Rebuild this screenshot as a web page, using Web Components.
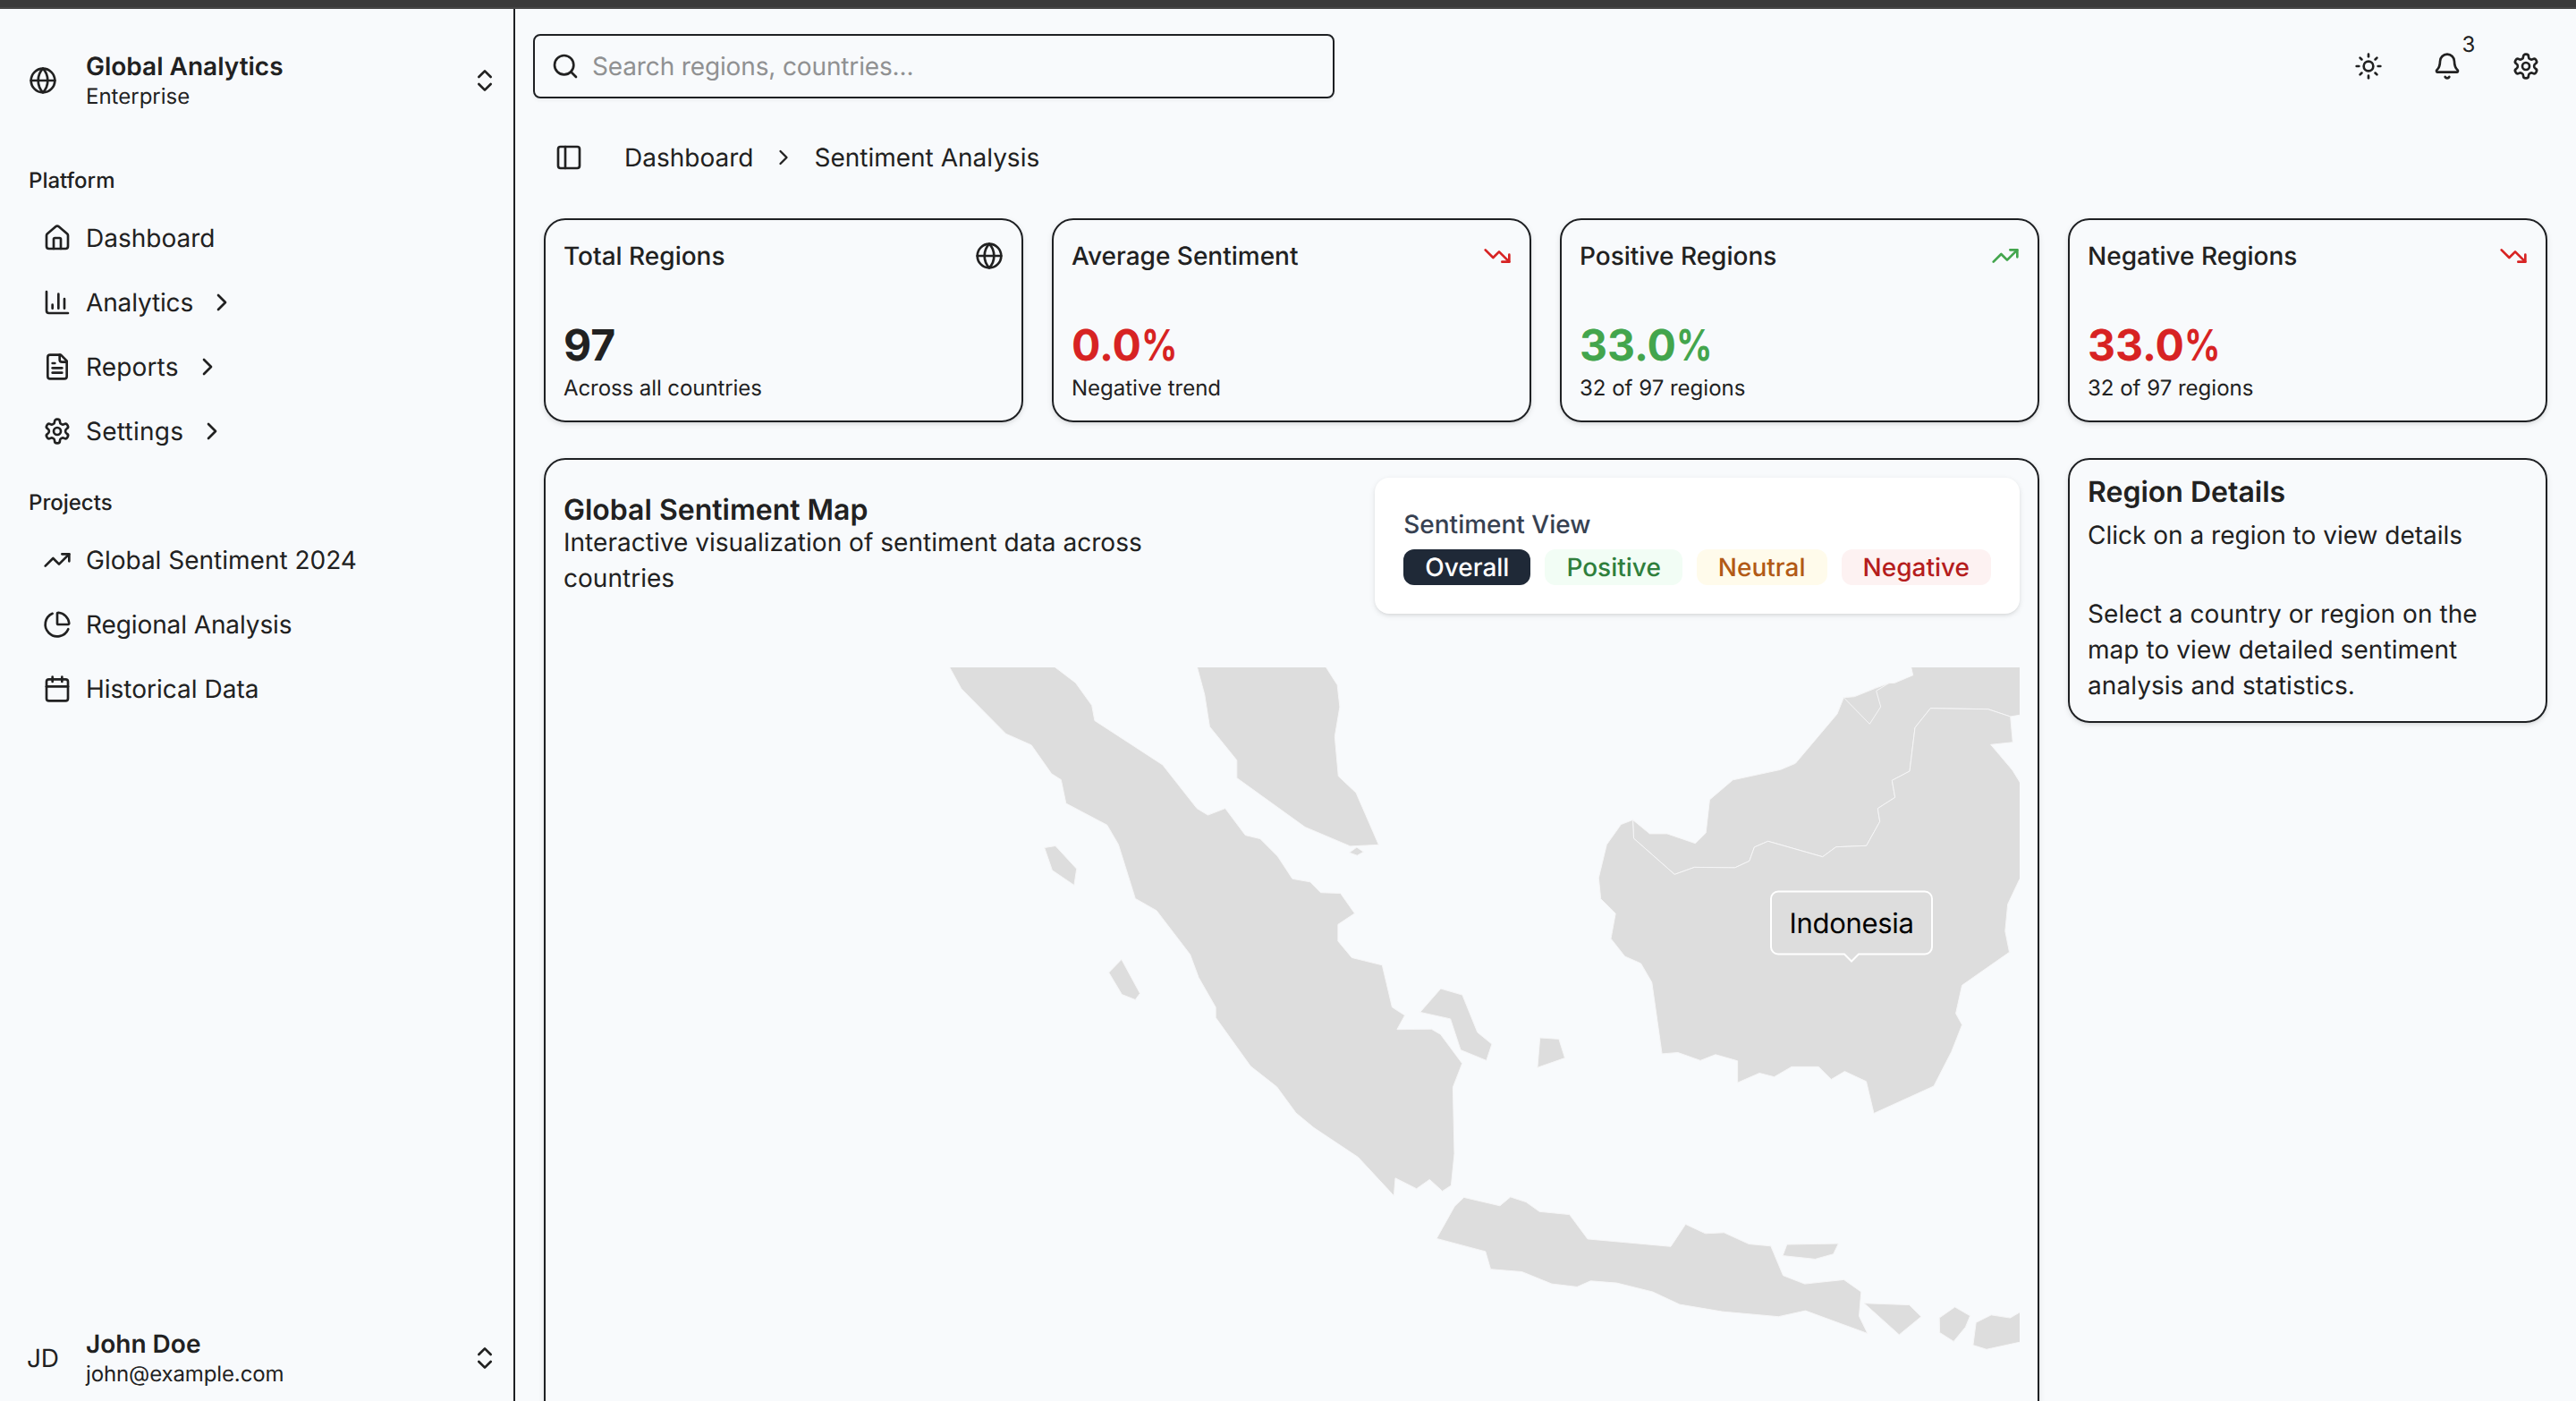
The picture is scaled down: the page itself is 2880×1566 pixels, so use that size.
<!DOCTYPE html>
<html lang="en">
<head>
<meta charset="utf-8">
<title>Global Analytics</title>
<style>
  :root { --bg: #f8fafc; --fg: #212121; --line: #1e2023; --red: #d72323; --green: #43a54d; }
  html, body { margin: 0; height: 100%; }
  body {
    background: var(--bg); color: var(--fg); overflow: hidden;
    font: 400 28px/40px Inter, "Liberation Sans", sans-serif;
    font-optical-sizing: none;
    text-rendering: geometricPrecision;
    -webkit-font-smoothing: antialiased;
  }
</style>
</head>
<body>
<app-shell>
  <app-sidebar slot="sidebar">
    <account-row slot="head" class="head"><ui-icon slot="avatar" name="globe"></ui-icon>Global Analytics<span slot="sub">Enterprise</span></account-row>
    <nav-group label="Platform">
      <nav-item icon="home">Dashboard</nav-item>
      <nav-item icon="chart" more style="letter-spacing:-.15px">Analytics</nav-item>
      <nav-item icon="file" more style="letter-spacing:.15px">Reports</nav-item>
      <nav-item icon="gear" more style="letter-spacing:.25px">Settings</nav-item>
    </nav-group>
    <nav-group label="Projects">
      <nav-item icon="up">Global Sentiment 2024</nav-item>
      <nav-item icon="pie" style="letter-spacing:-.1px">Regional Analysis</nav-item>
      <nav-item icon="calendar">Historical Data</nav-item>
    </nav-group>
    <account-row slot="foot"><span slot="avatar">JD</span>John Doe<span slot="sub" style="letter-spacing:-.12px">john@example.com</span></account-row>
  </app-sidebar>
  <top-header></top-header>
  <bread-crumbs><span>Dashboard</span><ui-icon name="right" style="--s:28px"></ui-icon><span>Sentiment Analysis</span></bread-crumbs>
  <dash-grid>
    <stat-card icon="globe" value="97" note="Across all countries" style="--track:-.08px">Total Regions</stat-card>
    <stat-card icon="down" tone="red" value="0.0%" note="Negative trend">Average Sentiment</stat-card>
    <stat-card icon="up" tone="green" value="33.0%" note="32 of 97 regions">Positive Regions</stat-card>
    <stat-card icon="down" tone="red" value="33.0%" note="32 of 97 regions">Negative Regions</stat-card>
    <map-card>
      <sentiment-view slot="tools"></sentiment-view>
      <region-map></region-map>
    </map-card>
    <region-details></region-details>
  </dash-grid>
</app-shell>

<script>
const ICONS = {
  globe: '<circle cx="12" cy="12" r="10"/><path d="M12 2a14.5 14.5 0 0 0 0 20 14.5 14.5 0 0 0 0-20"/><path d="M2 12h20"/>',
  updown: '<path d="m7 15 5 5 5-5"/><path d="m7 9 5-5 5 5"/>',
  home: '<path d="M15 21v-8a1 1 0 0 0-1-1h-4a1 1 0 0 0-1 1v8"/><path d="M3 10a2 2 0 0 1 .709-1.528l7-5.999a2 2 0 0 1 2.582 0l7 5.999A2 2 0 0 1 21 10v9a2 2 0 0 1-2 2H5a2 2 0 0 1-2-2z"/>',
  chart: '<path d="M3 3v16a2 2 0 0 0 2 2h16"/><path d="M18 17V9"/><path d="M13 17V5"/><path d="M8 17v-3"/>',
  file: '<path d="M15 2H6a2 2 0 0 0-2 2v16a2 2 0 0 0 2 2h12a2 2 0 0 0 2-2V7Z"/><path d="M14 2v4a2 2 0 0 0 2 2h4"/><path d="M10 9H8"/><path d="M16 13H8"/><path d="M16 17H8"/>',
  gear: '<path d="M12.22 2h-.44a2 2 0 0 0-2 2v.18a2 2 0 0 1-1 1.73l-.43.25a2 2 0 0 1-2 0l-.15-.08a2 2 0 0 0-2.73.73l-.22.38a2 2 0 0 0 .73 2.73l.15.1a2 2 0 0 1 1 1.72v.51a2 2 0 0 1-1 1.74l-.15.09a2 2 0 0 0-.73 2.73l.22.38a2 2 0 0 0 2.73.73l.15-.08a2 2 0 0 1 2 0l.43.25a2 2 0 0 1 1 1.73V20a2 2 0 0 0 2 2h.44a2 2 0 0 0 2-2v-.18a2 2 0 0 1 1-1.73l.43-.25a2 2 0 0 1 2 0l.15.08a2 2 0 0 0 2.73-.73l.22-.39a2 2 0 0 0-.73-2.73l-.15-.08a2 2 0 0 1-1-1.74v-.5a2 2 0 0 1 1-1.74l.15-.09a2 2 0 0 0 .73-2.73l-.22-.38a2 2 0 0 0-2.73-.73l-.15.08a2 2 0 0 1-2 0l-.43-.25a2 2 0 0 1-1-1.73V4a2 2 0 0 0-2-2z"/><circle cx="12" cy="12" r="3"/>',
  right: '<path d="m9 18 6-6-6-6"/>',
  up: '<path d="M22 7 13.5 15.5 8.5 10.5 2 17"/><path d="M16 7h6v6"/>',
  down: '<path d="M22 17 13.5 8.5 8.5 13.5 2 7"/><path d="M16 17h6v-6"/>',
  pie: '<path d="M21 12c.552 0 1.005-.449.95-.998a10 10 0 0 0-8.953-8.951c-.55-.055-.998.398-.998.95v8a1 1 0 0 0 1 1z"/><path d="M21.21 15.89A10 10 0 1 1 8 2.83"/>',
  calendar: '<path d="M8 2v4"/><path d="M16 2v4"/><rect width="18" height="18" x="3" y="4" rx="2"/><path d="M3 10h18"/>',
  search: '<circle cx="11" cy="11" r="8"/><path d="m21 21-4.3-4.3"/>',
  panel: '<rect width="18" height="18" x="3" y="3" rx="2"/><path d="M9 3v18"/>',
  sun: '<circle cx="12" cy="12" r="4"/><path d="M12 2v2"/><path d="M12 20v2"/><path d="m4.93 4.93 1.41 1.41"/><path d="m17.66 17.66 1.41 1.41"/><path d="M2 12h2"/><path d="M20 12h2"/><path d="m6.34 17.66-1.41 1.41"/><path d="m19.07 4.93-1.41 1.41"/>',
  bell: '<path d="M10.268 21a2 2 0 0 0 3.464 0"/><path d="M3.262 15.326A1 1 0 0 0 4 17h16a1 1 0 0 0 .74-1.673C19.41 13.956 18 12.499 18 8A6 6 0 0 0 6 8c0 4.499-1.411 5.956-2.738 7.326"/>'
};

function define(name, render) {
  customElements.define(name, class extends HTMLElement {
    constructor() { super(); this.attachShadow({ mode: 'open' }); }
    connectedCallback() { this.shadowRoot.innerHTML = render(this); }
  });
}

define('ui-icon', el => `
  <style>:host{display:block;flex:none;width:var(--s,32px);height:var(--s,32px)} svg{display:block;width:100%;height:100%}</style>
  <svg viewBox="0 0 24 24" fill="none" stroke="currentColor" stroke-width="2" stroke-linecap="round" stroke-linejoin="round">${ICONS[el.getAttribute('name')]}</svg>`);

define('app-shell', () => `
  <style>
    :host{display:flex;flex-direction:column;height:1566px;width:2880px;overflow:hidden}
    .strip{flex:none;height:8px;background:#3a3a3a;border-bottom:2px solid #464646}
    .cols{display:flex;flex:1;min-height:0}
    main{flex:1;min-width:0;display:flex;flex-direction:column;overflow:hidden}
  </style>
  <div class="strip"></div>
  <div class="cols"><slot name="sidebar"></slot><main><slot></slot></main></div>`);

define('app-sidebar', () => `
  <style>
    :host{display:flex;flex-direction:column;box-sizing:border-box;width:576px;flex:none;border-right:2px solid var(--line)}
    .head{padding:32px 0}
    nav{flex:1;display:flex;flex-direction:column;gap:16px}
  </style>
  <div class="head"><slot name="head"></slot></div>
  <nav><slot></slot></nav>
  <slot name="foot"></slot>`);

define('account-row', () => `
  <style>
    :host{display:flex;align-items:center;height:96px;padding:0 16px;gap:16px}
    .avatar{width:64px;display:flex;justify-content:center}
    .text{flex:1;display:flex;flex-direction:column}
    .name{font-weight:600;line-height:35px}
    .sub{font-size:24px;line-height:32px}
  </style>
  <div class="avatar"><slot name="avatar"></slot></div>
  <div class="text"><div class="name"><slot></slot></div><div class="sub"><slot name="sub"></slot></div></div>
  <ui-icon name="updown"></ui-icon>`);

define('nav-group', el => `
  <style>
    :host{display:flex;flex-direction:column}
    .label{height:64px;line-height:64px;padding-left:32px;font-size:24px;font-weight:500}
    .items{display:flex;flex-direction:column;gap:8px}
  </style>
  <div class="label">${el.getAttribute('label')}</div><div class="items"><slot></slot></div>`);

define('nav-item', el => `
  <style>:host{display:flex;align-items:center;gap:16px;height:64px;padding-left:48px}</style>
  <ui-icon name="${el.getAttribute('icon')}"></ui-icon><span><slot></slot></span>
  ${el.hasAttribute('more') ? '<ui-icon name="right"></ui-icon>' : ''}`);

define('top-header', () => `
  <style>
    :host{flex:none;display:flex;justify-content:space-between;align-items:center;padding:28px 20px 0}
    .search{box-sizing:border-box;width:896px;height:72px;display:flex;align-items:center;gap:14px;padding:0 18px;border:2px solid var(--line);border-radius:8px;box-shadow:0 2px 4px rgba(0,0,0,.06)}
    .hint{color:#909192;letter-spacing:-.14px}
    .actions{display:flex;gap:16px}
    .btn{position:relative;width:72px;height:72px;display:flex;align-items:center;justify-content:center}
    .badge{position:absolute;left:40px;top:-8px;width:40px;height:40px;text-align:center;font-size:24px}
  </style>
  <div class="search"><ui-icon name="search"></ui-icon><span class="hint">Search regions, countries...</span></div>
  <div class="actions">
    <div class="btn"><ui-icon name="sun"></ui-icon></div>
    <div class="btn"><ui-icon name="bell"></ui-icon><span class="badge">3</span></div>
    <div class="btn"><ui-icon name="gear"></ui-icon></div>
  </div>`);

define('bread-crumbs', () => `
  <style>
    :host{flex:none;display:flex;align-items:center;height:72px;padding:30px 0 0 44px}
    .trail{display:flex;align-items:center;gap:20px;padding-left:46px}
  </style>
  <ui-icon name="panel"></ui-icon><div class="trail"><slot></slot></div>`);

define('dash-grid', () => `
  <style>
    :host{flex:none;display:grid;grid-template-columns:repeat(4,536px);gap:40px 32px;padding:32px;align-items:start}
    ::slotted(map-card){grid-column:span 3}
  </style><slot></slot>`);

const CARD = 'box-sizing:border-box;border:2px solid var(--line);border-radius:24px;padding:20px;box-shadow:0 2px 6px rgba(0,0,0,.1),0 2px 4px -2px rgba(0,0,0,.1)';

define('stat-card', el => `
  <style>
    :host{display:flex;flex-direction:column;gap:48px;${CARD}}
    .top{display:flex;justify-content:space-between;align-items:center;font-weight:500}
    .value{font-size:48px;line-height:64px;font-weight:700}
    .unit{display:inline-block;transform:scaleX(.83);transform-origin:left}
    .note{font-size:24px;line-height:32px;letter-spacing:var(--track,0)}
    .tone{color:var(--${el.getAttribute('tone') || 'fg'})}
  </style>
  <div class="top"><slot></slot><ui-icon class="tone" name="${el.getAttribute('icon')}"></ui-icon></div>
  <div><div class="value tone">${el.getAttribute('value').replace('%', '<span class="unit">%</span>')}</div><div class="note">${el.getAttribute('note')}</div></div>`);

define('map-card', () => `
  <style>
    :host{display:flex;flex-direction:column;gap:60px;${CARD}}
    header{display:flex;justify-content:space-between;align-items:center}
    h2{margin:0;font-size:32px;line-height:32px;font-weight:600}
    p{margin:0;width:700px;letter-spacing:.03px}
  </style>
  <header><div><h2>Global Sentiment Map</h2><p>Interactive visualization of sentiment data across countries</p></div><slot name="tools"></slot></header>
  <slot></slot>`);

define('sentiment-view', () => `
  <style>
    :host{display:flex;flex-direction:column;gap:8px;padding:32px;background:#fff;border-radius:16px;box-shadow:0 2px 6px rgba(0,0,0,.1),0 2px 4px -2px rgba(0,0,0,.1);font-weight:500}
    .title{color:#374151}
    .row{display:flex;gap:16px}
    .row span{padding:0 24px;border-radius:12px}
    .all{background:#1f2937;color:#fff}
    .pos{background:#f2fdf5;color:#2f7f3c}
    .neu{background:#fffbeb;color:#b25a16}
    .neg{background:#fdf2f2;color:#b51d1d}
  </style>
  <div class="title">Sentiment View</div>
  <div class="row"><span class="all">Overall</span><span class="pos">Positive</span><span class="neu">Neutral</span><span class="neg">Negative</span></div>`);

define('region-details', () => `
  <style>
    :host{display:flex;flex-direction:column;${CARD}}
    h2{margin:0 0 12px;font-size:32px;line-height:32px;font-weight:600}
    p{margin:0}
    p+p{margin-top:48px;letter-spacing:.06px}
  </style>
  <h2>Region Details</h2><p>Click on a region to view details</p>
  <p>Select a country or region on the map to view detailed sentiment analysis and statistics.</p>`);

/* Survey tiles: [offset x, offset y, scale x, scale y] into map space. */
const TILE = { w: [410, -16, .39541, .39541], s: [910, 54, .47194, .46939], n: [1330, -16, 1/3, 1/3] };
const place = (tile, flat) => {
  const [ox, oy, sx, sy] = TILE[tile], out = [];
  for (let i = 0; i < flat.length; i += 2) out.push((ox + flat[i] * sx).toFixed(1) + ',' + (oy + flat[i + 1] * sy).toFixed(1));
  return out;
};
const inland = [
  ...place('s', [605,248,607,292,704,378,751,361,847,362,881,346,893,313]),
  ...place('n', [50,631,233,683,278,650,380,646,425,565,418,521,476,484,466,427,525,396,543,250,595,185,788,188,863,213])
];
const LAND = [
  place('w', [30,0,55,40,88,101,214,228,286,260,343,341,370,358,384,425,500,486,532,541,580,694,640,728,735,852,759,917,807,1001,807,1030,906,1168,980,1226,1034,1300,1085,1342,1210,1425,1311,1534,1315,1484,1375,1514,1412,1488,1448,1521,1473,1505,1482,1415,1478,1227,1504,1160,1443,1078,1417,1063,1320,1064,1342,1024,1306,1001,1278,882,1192,861,1153,814,1153,767,1200,736,1160,679,1104,677,1074,647,1024,638,982,574,933,525,891,515,834,439,785,458,754,439,657,316,465,191,457,148,411,84,353,40,300,0]),
  place('w', [745,0,755,40,776,118,790,208,867,303,867,353,1060,492,1188,546,1268,542,1204,395,1154,348,1144,236,1158,152,1151,90,1119,40,1095,0]),
  place('w', [1185,564,1206,549,1225,562,1207,572]),
  place('w', [323,550,354,545,414,610,407,656,345,614]),
  place('w', [505,903,541,866,593,962,580,980,542,965]),
  place('s', [101,706,150,650,201,665,237,754,271,782,258,821,197,796,173,722]),
  place('s', [385,767,430,770,444,815,379,838]),
  place('s', [140,1245,183,1168,205,1147,290,1167,315,1146,352,1158,384,1181,455,1188,498,1246,695,1264,730,1211,777,1233,821,1231,880,1258,932,1263,961,1333,1012,1353,1105,1343,1146,1372,1141,1430,1161,1471,1014,1417,950,1431,817,1419,716,1402,652,1372,567,1351,505,1346,473,1360,413,1353,342,1324,268,1318,256,1276]),
  place('s', [970,1259,1092,1257,1080,1282,1037,1294,960,1286]),
  place('s', [1153,1399,1260,1403,1288,1431,1236,1474]),
  place('s', [1331,1434,1368,1408,1404,1429,1393,1456,1365,1490,1332,1469]),
  place('s', [1418,1445,1454,1427,1499,1434,1521,1421,1560,1398,1560,1482,1521,1492,1443,1509,1411,1499]),
  [...place('n', [520,0,530,48,536,74,475,100,455,101,410,118,340,146,304,149,282,204,142,370,92,391]),
   ...place('s', [842,153,787,200,778,279,753,304,686,281,645,281]), ...inland, ...place('n', [940,200,940,0])],
  place('n', [304,149,391,238,428,180,413,127,455,101,410,118,340,146]),
  [...inland,
   ...place('n', [871,299,797,307,870,393,894,432,920,480,920,715,892,762,854,842]),
   ...place('s', [1487,513,1497,563,1385,642,1370,709,1385,736,1360,800,1318,882,1176,947,1158,871,1107,847,1075,866,1045,836,981,836,940,860,905,851,853,874,853,822,801,807,765,821,712,802,674,805,650,635,624,590,586,573,553,531,564,471,529,436,524,386,543,307,577,259])]
];

define('region-map', () => `
  <style>
    :host{display:block;height:1000px}
    svg{display:block;overflow:hidden}
    polygon{fill:#ddd;stroke:#f6f6f7;stroke-width:1}
    path{fill:#ddd;stroke:#fff;stroke-width:2}
    text{font-size:31px;letter-spacing:-.3px;fill:#000}
  </style>
  <svg width="1628" height="1000" viewBox="0 0 1628 1000">
    ${LAND.map(p => `<polygon points="${p.join(' ')}"/>`).join('')}
    <path d="M1358 250.5H1522a8 8 0 0 1 8 8V312.5a8 8 0 0 1 -8 8H1448L1440 328.5 1432 320.5H1358a8 8 0 0 1 -8 -8V258.5a8 8 0 0 1 8 -8Z"/>
    <text x="1440" y="297" text-anchor="middle">Indonesia</text>
  </svg>`);
</script>
</body>
</html>
